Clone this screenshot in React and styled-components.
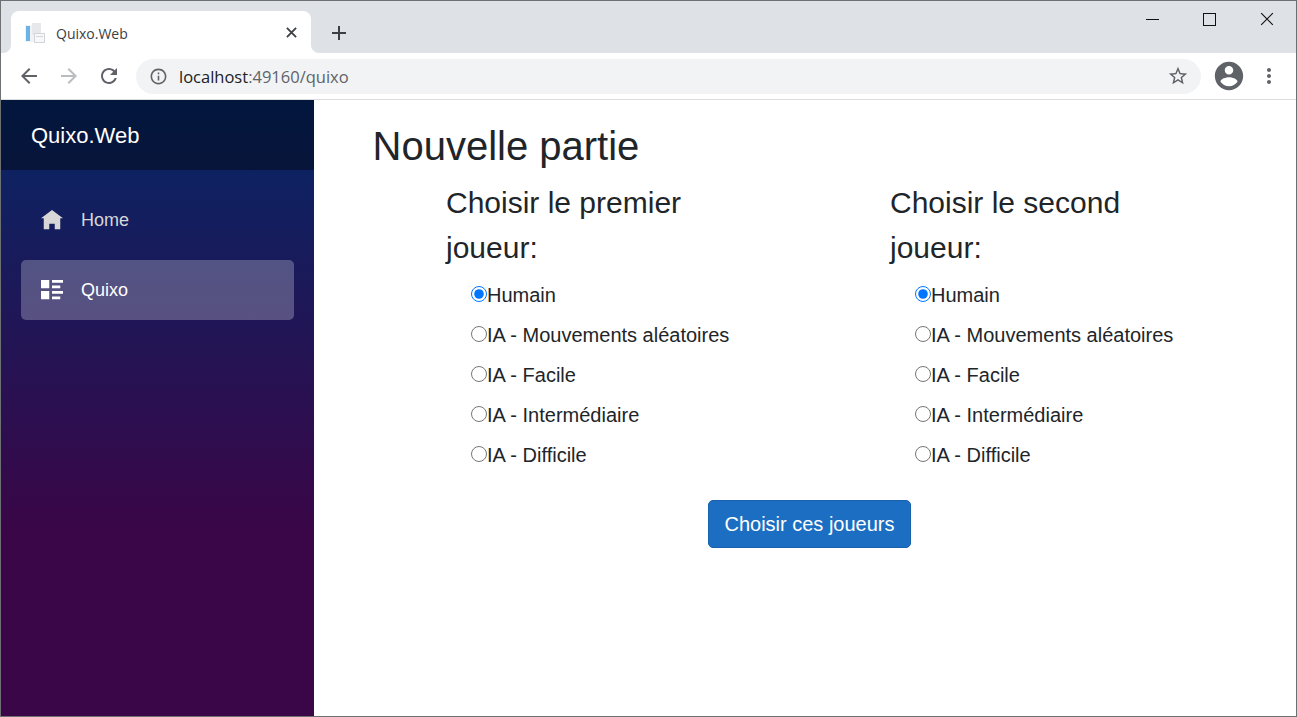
import React from 'react';
import styled, { createGlobalStyle } from 'styled-components';

const GlobalStyle = createGlobalStyle`
  html, body {
    margin: 0;
    padding: 0;
    height: 100%;
    background: #fff;
  }
  #root {
    height: 100%;
  }
  * {
    box-sizing: border-box;
  }
`;

const Window = styled.div`
  width: 1297px;
  height: 717px;
  border: 1px solid #6e7173;
  display: flex;
  flex-direction: column;
  overflow: hidden;
  font-family: "Liberation Sans", Arial, sans-serif;
  color: #212529;
`;

const TabStrip = styled.div`
  height: 52px;
  flex: none;
  background: #dee1e6;
  display: flex;
  align-items: flex-end;
  padding-left: 10px;
`;

const Tab = styled.div`
  position: relative;
  width: 300px;
  height: 42px;
  background: #fff;
  border-radius: 8px 8px 0 0;
  display: flex;
  align-items: center;
  padding: 1px 14px 0 14px;

  &::before,
  &::after {
    content: '';
    position: absolute;
    bottom: 0;
    width: 8px;
    height: 8px;
    background: radial-gradient(circle at var(--cx) 0, #dee1e6 7.5px, #fff 8.5px);
  }
  &::before {
    --cx: 0;
    left: -8px;
  }
  &::after {
    --cx: 100%;
    right: -8px;
  }
`;

const TabTitle = styled.span`
  flex: 1;
  margin: 1px 0 0 11px;
  font-family: "Open Sans", sans-serif;
  font-size: 14px;
  color: #3c4043;
`;

const NewTab = styled.div`
  margin-left: 20px;
  height: 42px;
  padding-top: 2px;
  display: flex;
  align-items: center;
`;

const WindowControls = styled.div`
  margin-left: auto;
  align-self: flex-start;
  display: flex;
  height: 36px;
`;

const ControlButton = styled.div`
  width: 58px;
  height: 36px;
  display: flex;
  align-items: center;
  justify-content: center;
`;

const Toolbar = styled.div`
  height: 47px;
  flex: none;
  background: #fff;
  border-bottom: 1px solid #dadce0;
  display: flex;
  align-items: center;
  padding: 0 7px 0 7.5px;
`;

const NavIcon = styled.div`
  width: 40px;
  height: 34px;
  flex: none;
  display: flex;
  align-items: center;
  justify-content: center;
  color: ${p => (p.$disabled ? '#babcbe' : '#5f6368')};
`;

const MenuSlot = styled(NavIcon)`
  width: 41px;
`;

const AvatarSlot = styled(MenuSlot)`
  padding-left: 2px;
`;

const Omnibox = styled.div`
  flex: none;
  width: 1065px;
  height: 35px;
  margin-left: 7.5px;
  margin-right: 6px;
  border-radius: 18px;
  background: #f1f3f4;
  display: flex;
  align-items: center;
  padding: 0 12px 0 13px;
  color: #5f6368;
`;

const Url = styled.span`
  flex: 1;
  margin-left: 11px;
  font-family: "Open Sans", sans-serif;
  font-size: 16.5px;
  color: #5f6368;

  b {
    font-weight: 400;
    color: #202124;
  }
`;

const Body = styled.div`
  flex: 1;
  display: flex;
  min-height: 0;
`;

const Sidebar = styled.aside`
  width: 313px;
  flex: none;
  background-image: linear-gradient(180deg, #052767 0%, #3a0647 70%);
`;

const Brand = styled.div`
  height: 70px;
  background: rgba(0, 0, 0, 0.4);
  display: flex;
  align-items: center;
  padding: 2px 0 0 30px;
  font-size: 22px;
  color: #fff;
`;

const NavList = styled.nav`
  padding: 20px 20px 0;
  display: flex;
  flex-direction: column;
  gap: 10px;
`;

const NavItem = styled.a`
  height: 60px;
  border-radius: 5px;
  display: flex;
  align-items: center;
  padding-left: 20px;
  gap: 18px;
  font-size: 18px;
  color: ${p => (p.$active ? '#fff' : '#d7d7d7')};
  background: ${p => (p.$active ? 'rgba(255, 255, 255, 0.25)' : 'transparent')};

  svg {
    margin-top: 2px;
  }
`;

const Content = styled.main`
  flex: 1;
  padding: 22px 49.5px 0 58.5px;
`;

const Title = styled.h1`
  margin: 0 0 10px;
  font-size: 40px;
  font-weight: 400;
  line-height: 48px;
`;

const Columns = styled.div`
  display: grid;
  grid-template-columns: 444px 1fr;
  padding-left: 73.5px;
`;

const Heading = styled.h3`
  margin: 0 0 5px;
  max-width: 300px;
  font-size: 30px;
  font-weight: 400;
  line-height: 45px;
`;

const Options = styled.div`
  padding-left: 25px;
`;

const Option = styled.label`
  height: 40px;
  display: flex;
  align-items: center;
  font-size: 20px;
`;

const Radio = styled.input`
  width: 16px;
  height: 16px;
  margin: 0 0 2px;
  flex: none;
`;

const Actions = styled.div`
  margin-top: 25px;
  display: flex;
  justify-content: center;
`;

const SubmitButton = styled.button`
  width: 203px;
  height: 48px;
  padding: 0;
  border: 1px solid #1861ac;
  border-radius: 5px;
  background: #1b6ec2;
  color: #fff;
  font-family: inherit;
  font-size: 20px;
`;

const Icon = ({ d, size = 24, color = 'currentColor', box = 24 }) => (
  <svg width={size} height={size} viewBox={`0 0 ${box} ${box}`} fill={color}>
    <path d={d} />
  </svg>
);

const ICONS = {
  back: 'M20 11H7.83l5.59-5.59L12 4l-8 8 8 8 1.41-1.41L7.83 13H20v-2z',
  forward: 'M12 4l-1.41 1.41L16.17 11H4v2h12.17l-5.58 5.59L12 20l8-8z',
  reload: 'M17.65 6.35C16.2 4.9 14.21 4 12 4c-4.42 0-7.99 3.58-7.99 8s3.57 8 7.99 8c3.73 0 6.84-2.55 7.73-6h-2.08c-.82 2.33-3.04 4-5.65 4-3.31 0-6-2.69-6-6s2.69-6 6-6c1.66 0 3.14.69 4.22 1.78L13 11h7V4l-2.35 2.35z',
  info: 'M11 7h2v2h-2zm0 4h2v6h-2zm1-9C6.48 2 2 6.48 2 12s4.48 10 10 10 10-4.48 10-10S17.52 2 12 2zm0 18c-4.41 0-8-3.59-8-8s3.59-8 8-8 8 3.59 8 8-3.59 8-8 8z',
  star: 'M22 9.24l-7.19-.62L12 2 9.19 8.63 2 9.24l5.46 4.73L5.82 21 12 17.27 18.18 21l-1.63-7.03L22 9.24zM12 15.4l-3.76 2.27 1-4.28-3.32-2.88 4.38-.38L12 6.1l1.71 4.04 4.38.38-3.32 2.88 1 4.28L12 15.4z',
  account: 'M12 2C6.48 2 2 6.48 2 12s4.48 10 10 10 10-4.48 10-10S17.52 2 12 2zm0 3c1.66 0 3 1.34 3 3s-1.34 3-3 3-3-1.34-3-3 1.34-3 3-3zm0 14.2c-2.5 0-4.71-1.28-6-3.22.03-1.99 4-3.08 6-3.08 1.99 0 5.97 1.09 6 3.08-1.29 1.94-3.5 3.22-6 3.22z',
  more: 'M12 8c1.1 0 2-.9 2-2s-.9-2-2-2-2 .9-2 2 .9 2 2 2zm0 2c-1.1 0-2 .9-2 2s.9 2 2 2 2-.9 2-2-.9-2-2-2zm0 6c-1.1 0-2 .9-2 2s.9 2 2 2 2-.9 2-2-.9-2-2-2z',
  home: 'M4 0l-4 3h1v4h2v-2h2v2h2v-4.03l1 .03-4-3z',
  listRich: 'M0 0v3h3v-3h-3zm4 0v1h4v-1h-4zm0 2v1h3v-1h-3zm-4 2v3h3v-3h-3zm4 0v1h4v-1h-4zm0 2v1h3v-1h-3z',
};

// page icon of the tab: a blue bar with two grey sheets over it
const Favicon = () => (
  <svg width="20" height="20" viewBox="0 0 20 20">
    <rect x="0" y="2" width="14" height="17" fill="#f0f2f4" />
    <rect x="1" y="3" width="4" height="15" fill="#6db2e6" />
    <rect x="7" y="0" width="9" height="12" fill="#e6e8eb" />
    <rect x="9.5" y="10.5" width="10" height="9" fill="#f7f8f9" stroke="#d3d6d9" />
    <rect x="11" y="13" width="7" height="1" fill="#d3d6d9" />
  </svg>
);

const Cross = ({ size = 11, color = '#3c4043', width = 2 }) => (
  <svg width={size} height={size} viewBox="0 0 12 12" stroke={color} strokeWidth={width}>
    <path d="M1 1l10 10M11 1L1 11" />
  </svg>
);

const PLAYER_OPTIONS = [
  'Humain',
  'IA - Mouvements aléatoires',
  'IA - Facile',
  'IA - Intermédiaire',
  'IA - Difficile',
];

const PlayerChoice = ({ title, name }) => (
  <section>
    <Heading>{title}</Heading>
    <Options>
      {PLAYER_OPTIONS.map((option, i) => (
        <Option key={option}>
          <Radio type="radio" name={name} defaultChecked={i === 0} />
          {option}
        </Option>
      ))}
    </Options>
  </section>
);

const App = () => {
  return (
    <>
      <GlobalStyle />
      <Window>
        <TabStrip>
          <Tab>
            <Favicon />
            <TabTitle>Quixo.Web</TabTitle>
            <Cross />
          </Tab>
          <NewTab>
            <svg width="16" height="16" viewBox="0 0 16 16" stroke="#3c4043" strokeWidth="2">
              <path d="M8 1v14M1 8h14" />
            </svg>
          </NewTab>
          <WindowControls>
            <ControlButton>
              <svg width="16" height="14" viewBox="0 0 16 14" stroke="#111" strokeWidth="1">
                <path d="M3 7.5h13" />
              </svg>
            </ControlButton>
            <ControlButton>
              <svg width="14" height="14" viewBox="0 0 14 14" fill="none" stroke="#111" strokeWidth="1">
                <rect x="1.5" y="1.5" width="12" height="12" />
              </svg>
            </ControlButton>
            <ControlButton>
              <Cross size={14} color="#111" width={1} />
            </ControlButton>
          </WindowControls>
        </TabStrip>

        <Toolbar>
          <NavIcon><Icon d={ICONS.back} /></NavIcon>
          <NavIcon $disabled><Icon d={ICONS.forward} /></NavIcon>
          <NavIcon><Icon d={ICONS.reload} /></NavIcon>
          <Omnibox>
            <Icon d={ICONS.info} size={19} />
            <Url><b>localhost</b>:49160/quixo</Url>
            <Icon d={ICONS.star} size={22} />
          </Omnibox>
          <AvatarSlot><Icon d={ICONS.account} size={34} /></AvatarSlot>
          <MenuSlot><Icon d={ICONS.more} /></MenuSlot>
        </Toolbar>

        <Body>
          <Sidebar>
            <Brand>Quixo.Web</Brand>
            <NavList>
              <NavItem>
                <Icon d={ICONS.home} size={22} box={8} />
                Home
              </NavItem>
              <NavItem $active>
                <Icon d={ICONS.listRich} size={22} box={8} />
                Quixo
              </NavItem>
            </NavList>
          </Sidebar>

          <Content>
            <Title>Nouvelle partie</Title>
            <Columns>
              <PlayerChoice title="Choisir le premier joueur:" name="first" />
              <PlayerChoice title="Choisir le second joueur:" name="second" />
            </Columns>
            <Actions>
              <SubmitButton>Choisir ces joueurs</SubmitButton>
            </Actions>
          </Content>
        </Body>
      </Window>
    </>
  );
};

export default App;
